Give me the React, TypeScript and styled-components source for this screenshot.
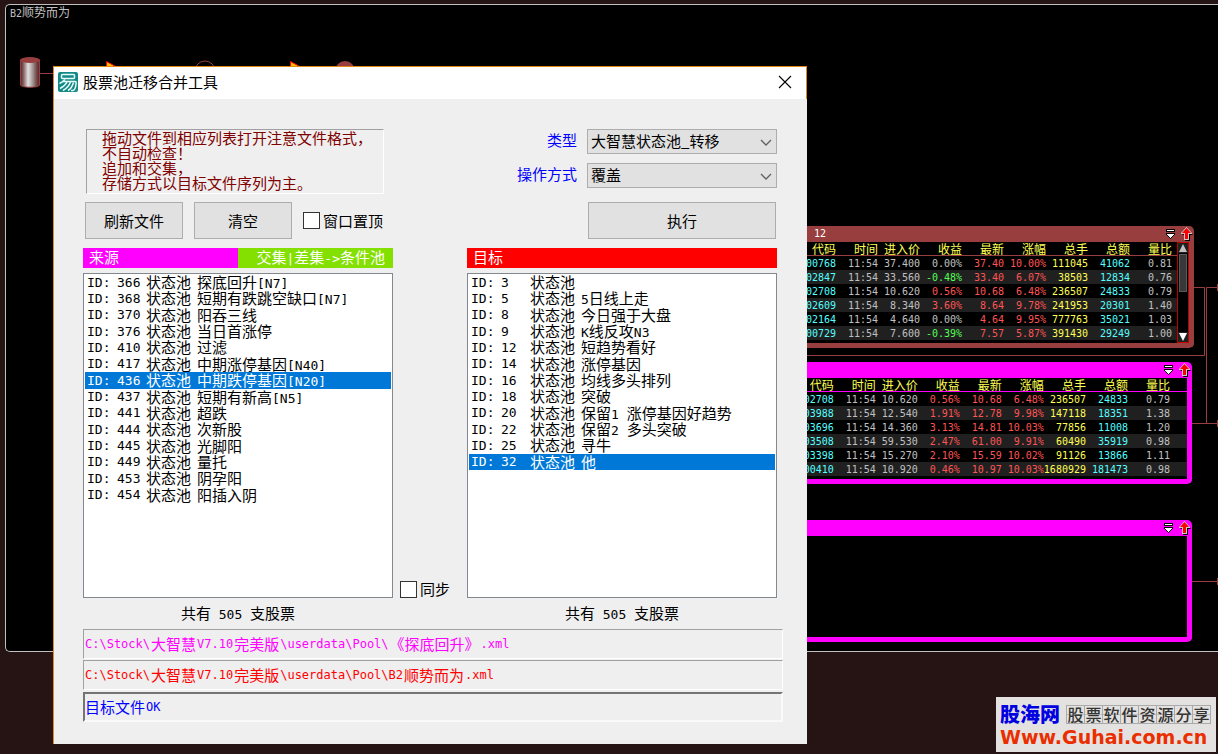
import React from "react";
import styled, { createGlobalStyle } from "styled-components";

const GlobalStyle = createGlobalStyle`
  * { box-sizing: border-box; }
  body {
    margin: 0;
    background: #261414;
    font-family: "Noto Sans CJK SC", sans-serif;
  }
`;

const Desktop = styled.div`
  position: relative;
  min-height: 100vh;
  padding: 4px 0 0 5px;
  overflow: hidden;
  background: #261414;
`;

const Canvas = styled.main`
  min-height: 648px;
  padding: 0 4px;
  background: #000;
  border: 1px solid #c0c0c0;
  border-right: 0;
  border-radius: 5px 0 0 5px;
`;

const CanvasTitle = styled.h1`
  margin: 0;
  font-size: 12px;
  line-height: 14px;
  font-weight: 400;
  color: #c0c0c0;
`;

const Wires = styled.svg`
  position: absolute;
  left: 0;
  top: 0;
`;

const LatinRun = styled.span<{ $size: number }>`
  font-family: "DejaVu Sans Mono", monospace;
  font-size: ${(p) => p.$size}px;
  line-height: 1;
  white-space: pre;
`;

/* Sets the half-width characters of a mixed string in the terminal face. */
function Mixed({ text, size = 13 }: { text: string; size?: number }) {
  return (
    <>
      {text.split(/([\x20-\x7e]+)/).map((part, i) =>
        i % 2 ? (
          <LatinRun key={i} $size={size}>
            {part}
          </LatinRun>
        ) : (
          part
        )
      )}
    </>
  );
}

/* ---------- stock panels on the canvas ---------- */

const Panel = styled.section<{ $top: number; $width: number; $color: string }>`
  position: absolute;
  left: 780px;
  top: ${(p) => p.$top}px;
  width: ${(p) => p.$width}px;
  height: 122px;
  display: flex;
  flex-direction: column;
  background: #000;
  border: 5px solid ${(p) => p.$color};
  border-top: 0;
  border-radius: 5px;
`;

const PanelHeader = styled.header<{ $color: string }>`
  flex: none;
  height: 16px;
  display: flex;
  align-items: center;
  justify-content: space-between;
  padding-left: 17px;
  background: ${(p) => p.$color};
  color: #fff;
`;

const PanelTitle = styled.h2`
  margin: 0;
  font: 400 10px/16px "DejaVu Sans Mono", monospace;
  white-space: pre;
`;

const PanelTools = styled.div`
  display: flex;
  align-items: center;
  gap: 4px;
  margin-right: -4px;
`;

const ToolButton = styled.button`
  display: block;
  width: 12px;
  height: 14px;
  padding: 0;
  border: 0;
  background: none;
`;

const PanelBody = styled.div`
  flex: 1;
  min-height: 0;
  display: flex;
  align-items: stretch;
`;

const QuoteTable = styled.table<{ $color: string; $end: number }>`
  flex: 1;
  align-self: flex-start;
  table-layout: fixed;
  border-collapse: separate;
  border-spacing: 0;
  th, td {
    width: 42px;
    padding: 0;
    text-align: right;
    white-space: nowrap;
    font-weight: 400;
  }
  td { padding-top: 2px; }
  th:first-child, td:first-child { width: auto; }
  th:last-child, td:last-child {
    width: ${(p) => 42 + p.$end}px;
    padding-right: ${(p) => p.$end}px;
  }
  th {
    height: 14px;
    font-size: 12px;
    line-height: 13px;
    color: #ffff54;
    border-bottom: 1px solid ${(p) => p.$color};
  }
  tbody tr:nth-child(even) { background: #202020; }
`;

const Quote = styled.td<{ $tone: string }>`
  height: 14px;
  font: 400 10px/12px "DejaVu Sans Mono", monospace;
  color: ${(p) => p.$tone};
`;

const ScrollRail = styled.div`
  flex: none;
  width: 12px;
  display: flex;
  flex-direction: column;
  border: 1px solid #c00000;
  background: #000;
`;

const RailButton = styled.button`
  display: block;
  width: 10px;
  height: 10px;
  padding: 0;
  border: 0;
  background: #202020;
`;

const RailThumb = styled.div`
  flex: none;
  width: 8px;
  height: 38px;
  margin: 1px 1px auto;
  background: #383838;
  border: 1px solid #585858;
`;

const CYAN = "#54ffff";
const GREY = "#c0c0c0";
const RED = "#ff5454";
const GREEN = "#54ff54";
const YELLOW = "#ffff54";

const columns = ["代码", "时间", "进入价", "收益", "最新", "涨幅", "总手", "总额", "量比"];

const quotesA = [
  ["00768", "11:54", "37.400", "0.00%", "37.40", "10.00%", "111045", "41062", "0.81"],
  ["02847", "11:54", "33.560", "-0.48%", "33.40", "6.07%", "38503", "12834", "0.76"],
  ["02708", "11:54", "10.620", "0.56%", "10.68", "6.48%", "236507", "24833", "0.79"],
  ["02609", "11:54", "8.340", "3.60%", "8.64", "9.78%", "241953", "20301", "1.40"],
  ["02164", "11:54", "4.640", "0.00%", "4.64", "9.95%", "777763", "35021", "1.03"],
  ["00729", "11:54", "7.600", "-0.39%", "7.57", "5.87%", "391430", "29249", "1.00"],
];

const quotesB = [
  ["02708", "11:54", "10.620", "0.56%", "10.68", "6.48%", "236507", "24833", "0.79"],
  ["03988", "11:54", "12.540", "1.91%", "12.78", "9.98%", "147118", "18351", "1.38"],
  ["03696", "11:54", "14.360", "3.13%", "14.81", "10.03%", "77856", "11008", "1.20"],
  ["03508", "11:54", "59.530", "2.47%", "61.00", "9.91%", "60490", "35919", "0.98"],
  ["03398", "11:54", "15.270", "2.10%", "15.59", "10.02%", "91126", "13866", "1.11"],
  ["00410", "11:54", "10.920", "0.46%", "10.97", "10.03%", "1680929", "181473", "0.98"],
];

function toneOf(col: number, value: string) {
  if (col === 0 || col === 7) return CYAN;
  if (col === 6) return YELLOW;
  if (col === 4 || col === 5) return RED;
  if (col === 3) {
    if (value.startsWith("-")) return GREEN;
    return value === "0.00%" ? GREY : RED;
  }
  return GREY;
}

function Quotes({ rows, color, end }: { rows: string[][]; color: string; end: number }) {
  return (
    <QuoteTable $color={color} $end={end}>
      <thead>
        <tr>
          {columns.map((c) => (
            <th key={c} scope="col">
              {c}
            </th>
          ))}
        </tr>
      </thead>
      <tbody>
        {rows.map((row) => (
          <tr key={row[0]}>
            {row.map((value, i) => (
              <Quote key={i} $tone={toneOf(i, value)}>
                {value}
              </Quote>
            ))}
          </tr>
        ))}
      </tbody>
    </QuoteTable>
  );
}

function Tools() {
  return (
    <PanelTools>
      <ToolButton aria-label="菜单">
        <svg width="12" height="14" viewBox="0 0 12 14" shapeRendering="crispEdges" display="block">
          <path d="M1 2h9v3h-9z" fill="#000" />
          <path d="M2 3h7v1h-7z" fill="#fff" />
          <path d="M1 6h9v2h-1v1h-1v1h-1v1h-1v1h-1v-1h-1v-1h-1v-1h-1v-1h-1z" fill="#000" />
          <path d="M2 7h7v1h-1v1h-1v1h-1v1h-1v-1h-1v-1h-1v-1h-1z" fill="#fff" />
        </svg>
      </ToolButton>
      <ToolButton aria-label="上移">
        <svg width="12" height="14" viewBox="0 0 12 14" display="block">
          <path d="M6.500 2L12 8H9V14H4V8H1Z" fill="#000" />
          <path d="M5.500 0L11 6V7H8V13H3V7H0V6Z" fill="#d0c8c8" />
          <path d="M5.500 1L10 6H7V12H4V6H1Z" fill="#f00" />
        </svg>
      </ToolButton>
    </PanelTools>
  );
}

/* ---------- dialog ---------- */

const Dialog = styled.div`
  position: absolute;
  left: 53px;
  top: 66px;
  width: 754px;
  background: #efefef;
  border-left: 1px solid #e08a14;
  color: #000;
  font-size: 15px;
  line-height: 20px;
`;

const TitleBar = styled.header`
  height: 33px;
  display: flex;
  align-items: center;
  gap: 5px;
  padding: 0 14px 2px 4px;
  background: #fff;
  border-top: 1px solid #e08a14;
  border-right: 1px solid #e08a14;
`;

const DialogTitle = styled.h2`
  flex: 1;
  margin: 0;
  font-size: 15px;
  line-height: 20px;
  font-weight: 400;
`;

const CloseButton = styled.button`
  display: block;
  width: 14px;
  height: 14px;
  padding: 0;
  border: 0;
  background: none;
`;

const DialogBody = styled.div`
  padding: 30px 24px 22px 29px;
`;

const Columns = styled.div`
  display: grid;
  grid-template-columns: 310px 74px 310px;
  align-items: end;
`;

const Controls = styled.div`
  display: flex;
  flex-direction: column;
  padding-left: 2px;
  gap: 8px;
`;

const Notice = styled.p`
  width: 298px;
  height: 65px;
  margin: 0 0 0 1px;
  padding: 0 0 0 15px;
  border: 1px solid;
  border-color: #a0a0a0 #fff #fff #a0a0a0;
  color: #800000;
  line-height: 15px;
  white-space: pre;
`;

const ButtonRow = styled.div`
  display: flex;
  align-items: center;
  gap: 11px;
`;

const PushButton = styled.button<{ $wide?: boolean }>`
  width: ${(p) => (p.$wide ? 188 : 98)}px;
  height: 37px;
  padding: 0;
  border: 1px solid #adadad;
  background: #e1e1e1;
  color: #000;
  font: 400 15px/20px "Noto Sans CJK SC", sans-serif;
`;

const CheckLabel = styled.label`
  display: flex;
  align-items: center;
  gap: 3px;
  white-space: nowrap;
`;

const CheckBox = styled.input`
  appearance: none;
  width: 17px;
  height: 17px;
  margin: 0;
  border: 1px solid #333;
  background: #fff;
`;

const Options = styled.div`
  grid-column: 2 / 4;
  display: grid;
  grid-template-columns: 1fr 190px;
  justify-items: end;
  align-items: center;
  column-gap: 10px;
  row-gap: 9px;
`;

const OptionLabel = styled.label`
  padding-bottom: 3px;
  color: #0000ff;
`;

const SelectBox = styled.div`
  position: relative;
  width: 190px;
  height: 25px;
`;

const Select = styled.select`
  appearance: none;
  width: 100%;
  height: 25px;
  padding: 0 24px 2px 3px;
  border: 1px solid #adadad;
  border-radius: 0;
  background: #e1e1e1;
  color: #000;
  font: 400 15px/20px "Noto Sans CJK SC", sans-serif;
`;

const Chevron = styled.svg`
  position: absolute;
  right: 5px;
  top: 10px;
  pointer-events: none;
`;

const RunSlot = styled.div`
  grid-column: 2;
  margin: 5px 1px 0 0;
`;

const Bars = styled(Columns)`
  margin: 9px 0 5px;
`;

const Bar = styled.div<{ $color?: string }>`
  display: flex;
  height: 20px;
  line-height: 18px;
  color: #fff;
  background: ${(p) => p.$color ?? "none"};
`;

const BarHalf = styled.span<{ $color?: string; $end?: boolean }>`
  flex: 1;
  padding: 0 8px 0 6px;
  text-align: ${(p) => (p.$end ? "right" : "left")};
  background: ${(p) => p.$color ?? "none"};
`;

const ListBox = styled.div`
  height: 325px;
  border: 1px solid #828790;
  background: #fff;
  padding: 0 1px;
`;

const Items = styled.ul<{ $height: number }>`
  display: grid;
  grid-auto-rows: minmax(0, 1fr);
  height: ${(p) => p.$height}px;
  margin: 0;
  padding: 0;
  list-style: none;
`;

const Item = styled.li<{ $selected: boolean }>`
  display: grid;
  grid-template-columns: 30px 29px 51px 1fr;
  grid-template-rows: 16px;
  align-items: center;
  padding-left: 2px;
  line-height: 16px;
  white-space: nowrap;
  color: ${(p) => (p.$selected ? "#fff" : "#000")};
  background: ${(p) => (p.$selected ? "#0078d7" : "none")};
`;

const ItemText = styled.span`
  height: 16px;
`;

const SyncSlot = styled.div`
  padding-left: 7px;
  line-height: 18px;
`;

const Counts = styled(Columns)`
  margin: 5px 0 6px;
  text-align: center;
`;

const Fields = styled.div`
  display: flex;
  flex-direction: column;
  gap: 1px;
`;

const PathField = styled.output<{ $color: string; $deep?: boolean }>`
  display: flex;
  align-items: center;
  height: 30px;
  margin-top: ${(p) => (p.$deep ? 1 : 0)}px;
  border: ${(p) => (p.$deep ? 2 : 1)}px solid;
  border-color: ${(p) =>
    p.$deep ? "#747474 #fafafa #fafafa #747474" : "#a0a0a0 #fff #fff #a0a0a0"};
  color: ${(p) => p.$color};
  white-space: nowrap;
  ${LatinRun} { padding: 0 1px; }
`;

type Pool = [id: number, name: string];

const sourcePools: Pool[] = [
  [366, "探底回升[N7]"],
  [368, "短期有跌跳空缺口[N7]"],
  [370, "阳吞三线"],
  [376, "当日首涨停"],
  [410, "过滤"],
  [417, "中期涨停基因[N40]"],
  [436, "中期跌停基因[N20]"],
  [437, "短期有新高[N5]"],
  [441, "超跌"],
  [444, "次新股"],
  [445, "光脚阳"],
  [449, "量托"],
  [453, "阴孕阳"],
  [454, "阳插入阴"],
];

const targetPools: Pool[] = [
  [3, ""],
  [5, "5日线上走"],
  [8, "今日强于大盘"],
  [9, "K线反攻N3"],
  [12, "短趋势看好"],
  [14, "涨停基因"],
  [16, "均线多头排列"],
  [18, "突破"],
  [20, "保留1 涨停基因好趋势"],
  [22, "保留2 多头突破"],
  [25, "寻牛"],
  [32, "他"],
];

function PoolList({ pools, selected, height }: { pools: Pool[]; selected: number; height: number }) {
  return (
    <ListBox>
      <Items $height={height}>
        {pools.map(([id, name]) => (
          <Item key={id} $selected={id === selected}>
            <LatinRun $size={13}>ID:</LatinRun>
            <LatinRun $size={13}>{id}</LatinRun>
            <ItemText>状态池</ItemText>
            <ItemText>
              <Mixed text={name} />
            </ItemText>
          </Item>
        ))}
      </Items>
    </ListBox>
  );
}

function Arrow() {
  return (
    <Chevron width="12" height="8" viewBox="0 0 12 8">
      <path d="M1 1l5 5l5-5" fill="none" stroke="#606060" strokeWidth="1.3" />
    </Chevron>
  );
}

/* ---------- site badge ---------- */

const SiteBadge = styled.aside`
  position: absolute;
  right: 2px;
  bottom: 2px;
  width: 220px;
  height: 55px;
  padding: 5px 4px 0;
  background: #e4e2e0;
`;

const BadgeTop = styled.div`
  display: flex;
  align-items: center;
  justify-content: space-between;
  height: 24px;
  padding-right: 1px;
`;

const BadgeName = styled.strong`
  font-size: 20px;
  line-height: 24px;
  font-weight: 900;
  color: #0000e0;
`;

const BadgeTiles = styled.span`
  display: flex;
  border: 1px solid #aaa;
  border-right: 0;
`;

const Tile = styled.span`
  width: 18px;
  height: 17px;
  font-size: 16px;
  line-height: 16px;
  font-weight: 500;
  text-align: center;
  color: #333;
  border-right: 1px solid #aaa;
  background: linear-gradient(#bbb, #bbb) 0 8px / 100% 1px no-repeat;
`;

const BadgeLink = styled.a`
  display: block;
  font: 700 19px/22px "DejaVu Sans", sans-serif;
  color: #ea2e00;
  text-decoration: none;
  white-space: nowrap;
`;

const MAROON = "#983e3e";
const MAGENTA = "#ff00ff";

export default function App() {
  return (
    <Desktop>
      <GlobalStyle />
      <Canvas>
        <CanvasTitle>
          <Mixed text="B2顺势而为" size={10} />
        </CanvasTitle>
      </Canvas>

      <Wires width="1218" height="652" viewBox="0 0 1218 652" fill="none">
        <defs>
          <linearGradient id="steel">
            <stop offset="0" stopColor="#5a2222" />
            <stop offset="0.15" stopColor="#806060" />
            <stop offset="0.4" stopColor="#e4e0e0" />
            <stop offset="0.6" stopColor="#b0a4a4" />
            <stop offset="0.85" stopColor="#704848" />
            <stop offset="1" stopColor="#5a2222" />
          </linearGradient>
        </defs>
        <path d="M20.500 60v25c0 3 19 3 19 0v-25" fill="url(#steel)" stroke={MAROON} />
        <ellipse cx="30" cy="60" rx="10" ry="3" fill={MAROON} />
        <g stroke={MAROON}>
          <path d="M40 73.500h14" />
          <path d="M1194 287.500h10.500v68h-400" />
          <path d="M1218 287.500h-11.500v136" />
          <path d="M1192 423.500h26M1192 581.500h26" />
          <path d="M1217.500 284v7M1217.500 420v7M1217.500 578v7" />
        </g>
        <path d="M106.500 61.500l11 6h-11zM290.500 61.500l11 6h-11z" fill="#ffc000" stroke="#f00" />
        <circle cx="205" cy="71" r="10" stroke={MAROON} />
        <circle cx="345" cy="71" r="10" fill={MAROON} />
      </Wires>

      <Panel $top={226} $width={414} $color={MAROON}>
        <PanelHeader $color={MAROON}>
          <PanelTitle>- 12</PanelTitle>
          <Tools />
        </PanelHeader>
        <PanelBody>
          <Quotes rows={quotesA} color={MAROON} end={5} />
          <ScrollRail>
            <RailButton aria-label="向上滚动">
              <svg width="10" height="10" viewBox="0 0 10 10" display="block">
                <path d="M5 1l4 8h-8z" fill="#c0c0c0" />
              </svg>
            </RailButton>
            <RailThumb />
            <RailButton aria-label="向下滚动">
              <svg width="10" height="10" viewBox="0 0 10 10" display="block">
                <path d="M1 1h8l-4 8z" fill="#fff" />
              </svg>
            </RailButton>
          </ScrollRail>
        </PanelBody>
      </Panel>

      <Panel $top={362} $width={412} $color={MAGENTA}>
        <PanelHeader $color={MAGENTA}>
          <PanelTitle />
          <Tools />
        </PanelHeader>
        <PanelBody>
          <Quotes rows={quotesB} color={MAGENTA} end={17} />
        </PanelBody>
      </Panel>

      <Panel $top={520} $width={412} $color={MAGENTA}>
        <PanelHeader $color={MAGENTA}>
          <PanelTitle />
          <Tools />
        </PanelHeader>
      </Panel>

      <Dialog role="dialog" aria-labelledby="dialog-title">
        <TitleBar>
          <svg width="20" height="20" viewBox="0 0 20 20" fill="none">
            <rect width="20" height="20" rx="2" fill="#138a86" />
            <g stroke="#e8fafa" strokeWidth="1.500">
              <rect x="3.500" y="2.500" width="13" height="4" rx="1" />
              <path d="M7 7.500Q5 10 1.500 11.500" />
              <path d="M4.500 9.500H17Q18.500 9.500 18 12Q17.500 18 15 18.500H13" />
              <path d="M9 10Q7 14 2 16.500M12.500 10Q10.500 15.500 5 18.500M15.500 10.500Q14 16 10 18.500" />
            </g>
          </svg>
          <DialogTitle id="dialog-title">股票池迁移合并工具</DialogTitle>
          <CloseButton aria-label="关闭">
            <svg width="14" height="14" viewBox="0 0 14 14" display="block">
              <path d="M1 1l12 12M13 1l-12 12" stroke="#000" strokeWidth="1.100" />
            </svg>
          </CloseButton>
        </TitleBar>

        <DialogBody>
          <Columns>
            <Controls>
              <Notice>
                {"拖动文件到相应列表打开注意文件格式，\n不自动检查！\n追加和交集，\n存储方式以目标文件序列为主。"}
              </Notice>
              <ButtonRow>
                <PushButton>刷新文件</PushButton>
                <PushButton>清空</PushButton>
                <CheckLabel>
                  <CheckBox type="checkbox" />
                  窗口置顶
                </CheckLabel>
              </ButtonRow>
            </Controls>
            <Options>
              <OptionLabel htmlFor="pool-type">类型</OptionLabel>
              <SelectBox>
                <Select id="pool-type" defaultValue="move">
                  <option value="move">大智慧状态池_转移</option>
                </Select>
                <Arrow />
              </SelectBox>
              <OptionLabel htmlFor="pool-mode">操作方式</OptionLabel>
              <SelectBox>
                <Select id="pool-mode" defaultValue="cover">
                  <option value="cover">覆盖</option>
                </Select>
                <Arrow />
              </SelectBox>
              <RunSlot>
                <PushButton $wide>执行</PushButton>
              </RunSlot>
            </Options>
          </Columns>

          <Bars>
            <Bar>
              <BarHalf $color={MAGENTA}>来源</BarHalf>
              <BarHalf $color="#84e000" $end>
                <Mixed text="交集|差集->条件池" />
              </BarHalf>
            </Bar>
            <span />
            <Bar $color="#ff0000">
              <BarHalf>目标</BarHalf>
            </Bar>
          </Bars>

          <Columns>
            <PoolList pools={sourcePools} selected={436} height={229} />
            <SyncSlot>
              <CheckLabel>
                <CheckBox type="checkbox" />
                同步
              </CheckLabel>
            </SyncSlot>
            <PoolList pools={targetPools} selected={32} height={196} />
          </Columns>

          <Counts>
            <span>
              <Mixed text="共有 505 支股票" />
            </span>
            <span />
            <span>
              <Mixed text="共有 505 支股票" />
            </span>
          </Counts>

          <Fields>
            <PathField $color={MAGENTA}>
              <Mixed size={12} text="C:\Stock\大智慧V7.10完美版\userdata\Pool\《探底回升》.xml" />
            </PathField>
            <PathField $color="#ff0000">
              <Mixed size={12} text="C:\Stock\大智慧V7.10完美版\userdata\Pool\B2顺势而为.xml" />
            </PathField>
            <PathField $color="#0000ff" $deep>
              <Mixed size={12} text="目标文件OK" />
            </PathField>
          </Fields>
        </DialogBody>
      </Dialog>

      <SiteBadge>
        <BadgeTop>
          <BadgeName>股海网</BadgeName>
          <BadgeTiles>
            {[..."股票软件资源分享"].map((c) => (
              <Tile key={c}>{c}</Tile>
            ))}
          </BadgeTiles>
        </BadgeTop>
        <BadgeLink href="#">Www.Guhai.com.cn</BadgeLink>
      </SiteBadge>
    </Desktop>
  );
}
